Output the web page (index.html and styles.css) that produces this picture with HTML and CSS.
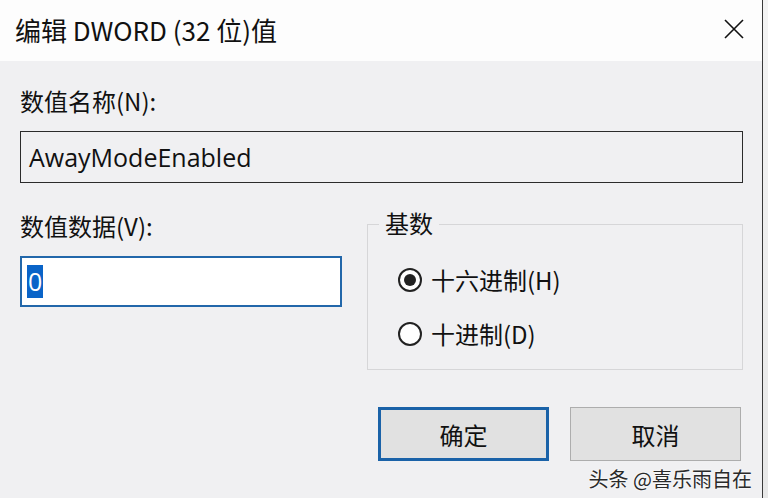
FILE: index.html
```html
<!DOCTYPE html>
<html lang="zh-CN">
<head>
<meta charset="utf-8">
<link rel="stylesheet" href="styles.css">
</head>
<body>
<div class="screen">
  <div class="dialog">
    <div class="titlebar">
      <div class="title">编辑 DWORD (32 位)值</div>
      <svg class="close" width="20" height="20" viewBox="0 0 20 20"><path d="M1 1 L19 19 M19 1 L1 19" stroke="#111" stroke-width="1.6" fill="none"/></svg>
    </div>
    <div class="content">
      <div class="label label-name">数值名称(N):</div>
      <div class="field field-name"><span class="latin">AwayModeEnabled</span></div>
      <div class="lower">
        <div class="left-col">
          <div class="label label-data">数值数据(V):</div>
          <div class="field field-data"><span class="sel latin">0</span></div>
        </div>
        <div class="group">
          <div class="legend">基数</div>
          <div class="radio-row">
            <span class="radio checked"><span class="dot"></span></span>
            <span class="radio-text">十六进制(H)</span>
          </div>
          <div class="radio-row">
            <span class="radio"></span>
            <span class="radio-text">十进制(D)</span>
          </div>
        </div>
      </div>
      <div class="buttons">
        <div class="btn btn-ok">确定</div>
        <div class="btn btn-cancel">取消</div>
      </div>
      <div class="watermark">头条 @喜乐雨自在</div>
    </div>
  </div>
  <div class="behind"></div>
</div>
</body>
</html>
```
FILE: styles.css
```css
* { box-sizing: border-box; }
html, body { margin: 0; padding: 0; }
body {
  width: 768px;
  height: 498px;
  overflow: hidden;
  font-family: "Noto Sans CJK SC", "Noto Sans", sans-serif;
  color: #111;
}
.screen {
  display: flex;
  width: 768px;
  height: 498px;
}
.dialog {
  width: 763px;
  height: 498px;
  display: flex;
  flex-direction: column;
  border-right: 1px solid #3a3a3a;
  background: #f0f0f2;
}
.behind {
  width: 5px;
  background: linear-gradient(#f4f4f4, #e8e8e8);
}
.titlebar {
  height: 61px;
  background: #fdfdfd;
  display: flex;
  align-items: center;
  justify-content: space-between;
  padding: 0 18px 0 15px;
  flex-shrink: 0;
}
.title {
  font-size: 26px;
  line-height: 30px;
  margin-top: -2px;
}
.close { margin-top: -4px; }
.content {
  flex: 1;
  padding: 0 19px 0 20px;
  display: flex;
  flex-direction: column;
  position: relative;
}
.label {
  font-size: 24px;
  line-height: 30px;
}
.latin {
  font-family: "Open Sans", "Noto Sans", sans-serif;
}
.label-name { margin-top: 25px; }
.field {
  background: #fff;
  display: flex;
  align-items: center;
  font-size: 25px;
}
.field-name {
  margin-top: 15px;
  height: 52px;
  border: 1px solid #2b2b2b;
  padding-left: 8px;
  background: #f0f0f2;
}
.lower {
  display: flex;
  margin-top: 28px;
}
.left-col {
  width: 322px;
  display: flex;
  flex-direction: column;
}
.field-data {
  margin-top: 15px;
  height: 51px;
  border: 2px solid #2267aa;
  padding-left: 5px;
}
.sel {
  background: #0a64c8;
  color: #fff;
  font-size: 25px;
  line-height: 33px;
  padding: 0 1px;
}
.group {
  margin-left: 25px;
  margin-top: 13px;
  width: 376px;
  height: 146px;
  border: 1px solid #d6d6d8;
  position: relative;
  padding: 43px 0 0 30px;
  display: flex;
  flex-direction: column;
  gap: 30px;
}
.legend {
  position: absolute;
  top: -17px;
  left: 11px;
  padding: 0 6px;
  background: #f0f0f2;
  font-size: 24px;
  line-height: 30px;
}
.radio-row {
  display: flex;
  align-items: center;
  gap: 9px;
  height: 24px;
}
.radio {
  width: 24px;
  height: 24px;
  border: 2px solid #222;
  border-radius: 50%;
  background: #fff;
  display: flex;
  align-items: center;
  justify-content: center;
}
.dot {
  width: 12px;
  height: 12px;
  border-radius: 50%;
  background: #222;
}
.radio-text {
  font-size: 24px;
  line-height: 30px;
}
.buttons {
  display: flex;
  margin-top: 37px;
  margin-left: 358px;
  gap: 21px;
}
.btn {
  height: 54px;
  display: flex;
  align-items: center;
  justify-content: center;
  background: #e1e1e1;
  font-size: 24px;
}
.btn-ok {
  width: 171px;
  border: 3px solid #1a62a8;
}
.btn-cancel {
  width: 171px;
  border: 1px solid #adadad;
}
.watermark {
  position: absolute;
  right: 10px;
  bottom: 6px;
  font-size: 20px;
  line-height: 26px;
  color: #2a2a2a;
  text-shadow: 0 0 2px #fff, 0 0 2px #fff;
}
```
